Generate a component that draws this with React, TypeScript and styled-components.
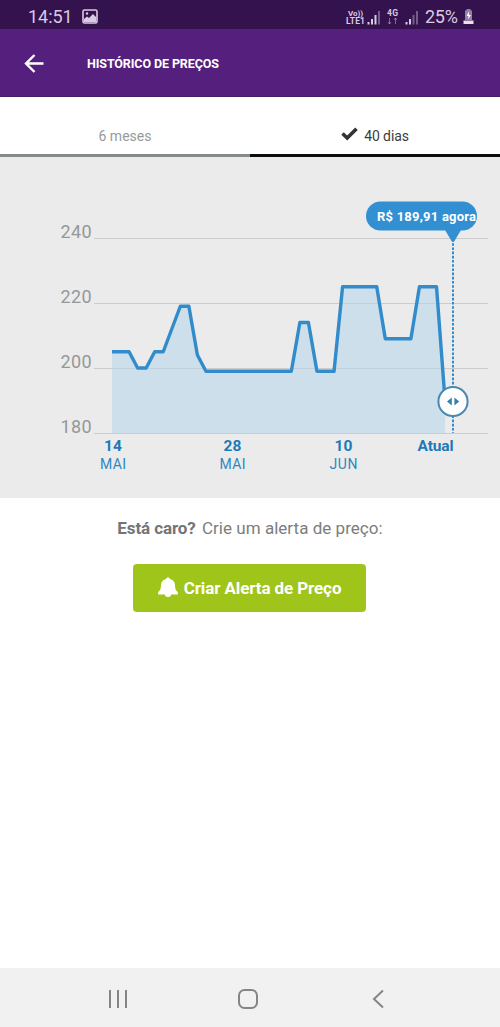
import React from 'react';
import styled, { createGlobalStyle } from 'styled-components';

const GlobalStyle = createGlobalStyle`
    * {
        box-sizing: border-box;
    }
    body {
        margin: 0;
        background-color: #fff;
        font-family: Roboto, sans-serif;
    }
`

const Screen = styled.div`
    display: flex;
    flex-direction: column;
    width: 500px;
    height: 1027px;
    overflow: hidden;
    background-color: #fff;
`

// Status bar
const StatusBar = styled.div`
    display: flex;
    align-items: center;
    height: 29px;
    padding: 4px 26px 0 28px;
    background-color: #33124d;
    color: #d9cbe3;
`
const Clock = styled.span`
    width: 54px;
    font-size: 18px;
    line-height: 24px;
    letter-spacing: -0.05px;
`
const StatusIcons = styled.div`
    display: flex;
    align-items: center;
    margin-left: auto;
`
const Battery = styled.span`
    width: 38px;
    font-size: 18px;
    line-height: 24px;
    letter-spacing: -0.3px;
`

// Header
const Header = styled.header`
    display: flex;
    align-items: center;
    height: 68px;
    padding: 0 24px;
    background-color: #55207d;
    border-bottom: 1px solid #452064;
    color: #fff;
`
const Title = styled.h1`
    margin: 1px 0 0 43px;
    font-size: 12.5px;
    font-weight: 700;
    letter-spacing: -0.1px;
`

// Tabs
const Tabs = styled.div`
    display: grid;
    grid-template-columns: 1fr 1fr;
    height: 60px;
`
const Tab = styled.button<{ $active?: boolean }>`
    display: flex;
    align-items: center;
    justify-content: center;
    gap: 6px;
    padding: 20px 0 0;
    border: none;
    border-bottom: 3px solid ${props => props.$active ? '#0d0d0d' : '#858b8b'};
    background-color: #fff;
    color: ${props => props.$active ? '#3c3c3c' : '#969a9a'};
    font-family: inherit;
    font-size: 14px;
    letter-spacing: ${props => props.$active ? '-0.1px' : '0'};
    svg {
        margin-top: -3px;
    }
`

// Chart
const ChartPanel = styled.section`
    height: 341px;
    background-color: #ebebeb;
`
const ChartSvg = styled.svg`
    display: block;
    font-family: Roboto, sans-serif;
`
const AxisText = styled.text`
    fill: #949898;
    font-size: 18px;
`
const DayText = styled.text`
    fill: #1d7ab8;
    font-size: 15.5px;
    font-weight: 700;
`
const MonthText = styled.text`
    fill: #2f87bf;
    font-size: 14px;
`
const BubbleText = styled.text`
    fill: #fff;
    font-size: 13px;
    font-weight: 700;
`

// Price alert
const AlertSection = styled.section`
    display: flex;
    flex: 1;
    flex-direction: column;
    align-items: center;
    padding-top: 18px;
`
const AlertText = styled.p`
    margin: 0;
    color: #7d7d7d;
    font-size: 17px;
    line-height: 24px;
    letter-spacing: 0.03px;
    white-space: nowrap;
    b {
        margin-right: 2px;
        color: #747474;
        letter-spacing: -0.1px;
    }
`
const AlertButton = styled.button`
    display: flex;
    align-items: center;
    justify-content: center;
    gap: 6px;
    width: 233px;
    height: 48px;
    margin: 24px 1px 0 0;
    padding: 0;
    border: none;
    border-radius: 4px;
    background-color: #a0c51a;
    color: #fff;
    font-family: inherit;
    font-size: 17px;
    font-weight: 700;
    letter-spacing: -0.1px;
    svg {
        margin-top: -2px;
    }
`

// Android navigation
const NavBar = styled.nav`
    display: flex;
    align-items: center;
    gap: 110px;
    height: 59px;
    padding: 3px 0 0 108px;
    background-color: #f1f1f1;
`
const BackIcon = styled.svg`
    margin-left: 4px;
`

const levels = [240, 220, 200, 180];

// [day, price]
const prices = [
    [0, 205], [2, 205], [3, 200], [4, 200], [5, 205], [6, 205], [8, 219], [9, 219],
    [10, 204], [11, 199], [21, 199], [22, 214], [23, 214], [24, 199], [26, 199],
    [27, 225], [31, 225], [32, 209], [35, 209], [36, 225], [38, 225], [39, 189.91],
];

const dates = [
    { x: 113, day: '14', month: 'MAI', width: 18, monthWidth: 26 },
    { x: 232.5, day: '28', month: 'MAI', width: 18, monthWidth: 26 },
    { x: 343.5, day: '10', month: 'JUN', width: 18, monthWidth: 28 },
];

const xOf = (day: number) => 112 + day * 8.54;
const yOf = (price: number) => 276 - (price - 180) * 3.25;

const line = prices.map(([day, price]) => `${xOf(day)},${yOf(price)}`).join(' ');
const area = `${xOf(0)},276 ${line} ${xOf(39)},276`;

const PriceChart = () => {
    return (
        <ChartSvg width="500" height="341" viewBox="0 0 500 341">
            {levels.map(level => (
                <g key={level}>
                    <line x1="94" x2="488" y1={Math.floor(yOf(level)) + 0.5} y2={Math.floor(yOf(level)) + 0.5} stroke="#cccccc" />
                    <AxisText x="60.5" y={yOf(level)} textLength="31">{level}</AxisText>
                </g>
            ))}
            <polygon points={area} fill="#b4d6ea" fillOpacity="0.55" />
            <polyline points={line} fill="none" stroke="#328bca" strokeWidth="3.4" strokeLinejoin="round" />

            {/* Current price */}
            <line x1="453" x2="453" y1="82" y2="276" stroke="#328bca" strokeWidth="2" strokeDasharray="2.6 1.6" />
            <rect x="366" y="44.5" width="111" height="29" rx="14.5" fill="#3290d2" />
            <path d="M445 73h16l-6.5 11q-1.5 2-3 0z" fill="#3290d2" />
            <BubbleText x="377" y="64" textLength="99">R$ 189,91 agora</BubbleText>
            <circle cx="453" cy="244.5" r="14.6" fill="#fff" stroke="#4789b3" strokeWidth="2" />
            <path d="M451.8 240.5v8l-4.8-4zM454.4 240.5v8l4.8-4z" fill="#367fae" />

            {/* Dates */}
            {dates.map(date => (
                <g key={date.x} textAnchor="middle">
                    <DayText x={date.x} y="293.5" textLength={date.width}>{date.day}</DayText>
                    <MonthText x={date.x} y="312" textLength={date.monthWidth}>{date.month}</MonthText>
                </g>
            ))}
            <DayText x="417.5" y="293.5" textLength="36">Atual</DayText>
        </ChartSvg>
    );
}

const SignalIcon = ({ dim }: { dim?: boolean }) => (
    <svg width="15" height="16" viewBox="0 0 15 16" fill="#d9cbe3">
        <rect x="0.5" y="13" width="2" height="2.500" />
        <rect x="4" y="10" width="2" height="5.500" />
        <rect x="7.5" y="6" width="2" height="9.500" opacity={dim ? 0.4 : 1} />
        <rect x="11" y="2" width="2" height="13.500" opacity="0.4" />
    </svg>
)

const App = () => {
    return (
        <>
            <GlobalStyle />
            <Screen>
                <StatusBar>
                    <Clock>14:51</Clock>
                    <svg width="16" height="15" viewBox="0 0 16 15">
                        <rect x="1" y="1" width="14" height="13" rx="1.5" fill="none" stroke="#d9cbe3" strokeWidth="1.6" />
                        <path d="M2 13V10l3-2.500 2 1.500 4-4 3 3v5z" fill="#d9cbe3" />
                        <circle cx="5" cy="4.500" r="1.200" fill="#d9cbe3" />
                    </svg>
                    <StatusIcons>
                        <svg width="21" height="18" viewBox="0 0 21 18" fill="#d9cbe3" fontFamily="Roboto, sans-serif" fontWeight="700">
                            <text x="2" y="7.5" fontSize="8" textLength="15">Vo))</text>
                            <text x="0" y="16" fontSize="8.5" textLength="19">LTE1</text>
                        </svg>
                        <SignalIcon />
                        <svg width="21" height="18" viewBox="0 0 21 18" fill="#d9cbe3">
                            <text x="5" y="8" fontFamily="Roboto, sans-serif" fontWeight="700" fontSize="8.5" textLength="11">4G</text>
                            <path d="M7.5 10v6M6 14l1.5 2L9 14M13.5 16v-6M12 12l1.5-2 1.5 2" fill="none" stroke="#d9cbe3" opacity="0.45" />
                        </svg>
                        <svg width="2" height="1" />
                        <SignalIcon dim />
                        <svg width="5" height="1" />
                        <Battery>25%</Battery>
                        <svg width="11" height="16" viewBox="0 0 11 16">
                            <path d="M3.5 0h4v1.500H9V11H2V1.500h1.500z" fill="#d9cbe3" opacity="0.6" />
                            <path d="M0.5 11.500h10V15h-10z" fill="#e8deee" />
                            <path d="M6 2.500L3.500 7h2L5 10.500 8 6H6z" fill="#fff" />
                        </svg>
                    </StatusIcons>
                </StatusBar>

                <Header>
                    <svg width="20" height="20" viewBox="0 0 20 20" fill="none" stroke="#fff" strokeWidth="2.4">
                        <path d="M19.5 10.500H2M10.500 2L2 10.500l8.500 8.500" />
                    </svg>
                    <Title>HISTÓRICO DE PREÇOS</Title>
                </Header>

                <Tabs>
                    <Tab>6 meses</Tab>
                    <Tab $active>
                        <svg width="17" height="14" viewBox="0 0 17 14" fill="none" stroke="#333" strokeWidth="3.6">
                            <path d="M1.5 6.5L6.2 11 15.5 1.7" />
                        </svg>
                        40 dias
                    </Tab>
                </Tabs>

                <ChartPanel>
                    <PriceChart />
                </ChartPanel>

                <AlertSection>
                    <AlertText><b>Está caro?</b> Crie um alerta de preço:</AlertText>
                    <AlertButton>
                        <svg width="20" height="20" viewBox="0 0 20 20" fill="#fff">
                            <path d="M10 0.500c1 0 1.700.6 1.900 1.400 3.300.8 5 3 5.100 6.100.1 4 .8 5.500 2.800 7v2.500H13a3 2.500 0 0 1-6 0H.2V15c2-1.500 2.700-3 2.800-7 .1-3.100 1.800-5.300 5.100-6.100C8.300 1.100 9 .5 10 .5z" />
                        </svg>
                        Criar Alerta de Preço
                    </AlertButton>
                </AlertSection>

                <NavBar>
                    <svg width="20" height="20" viewBox="0 0 20 20" stroke="#858585" strokeWidth="2">
                        <path d="M2 1v18M10 1v18M18 1v18" />
                    </svg>
                    <svg width="20" height="20" viewBox="0 0 20 20" fill="none" stroke="#858585" strokeWidth="2">
                        <rect x="1" y="1" width="18" height="18" rx="5.5" />
                    </svg>
                    <BackIcon width="12" height="20" viewBox="0 0 12 20" fill="none" stroke="#858585" strokeWidth="2">
                        <path d="M11 1.500L2 10l9 8.500" />
                    </BackIcon>
                </NavBar>
            </Screen>
        </>
    );
}

export default App;
